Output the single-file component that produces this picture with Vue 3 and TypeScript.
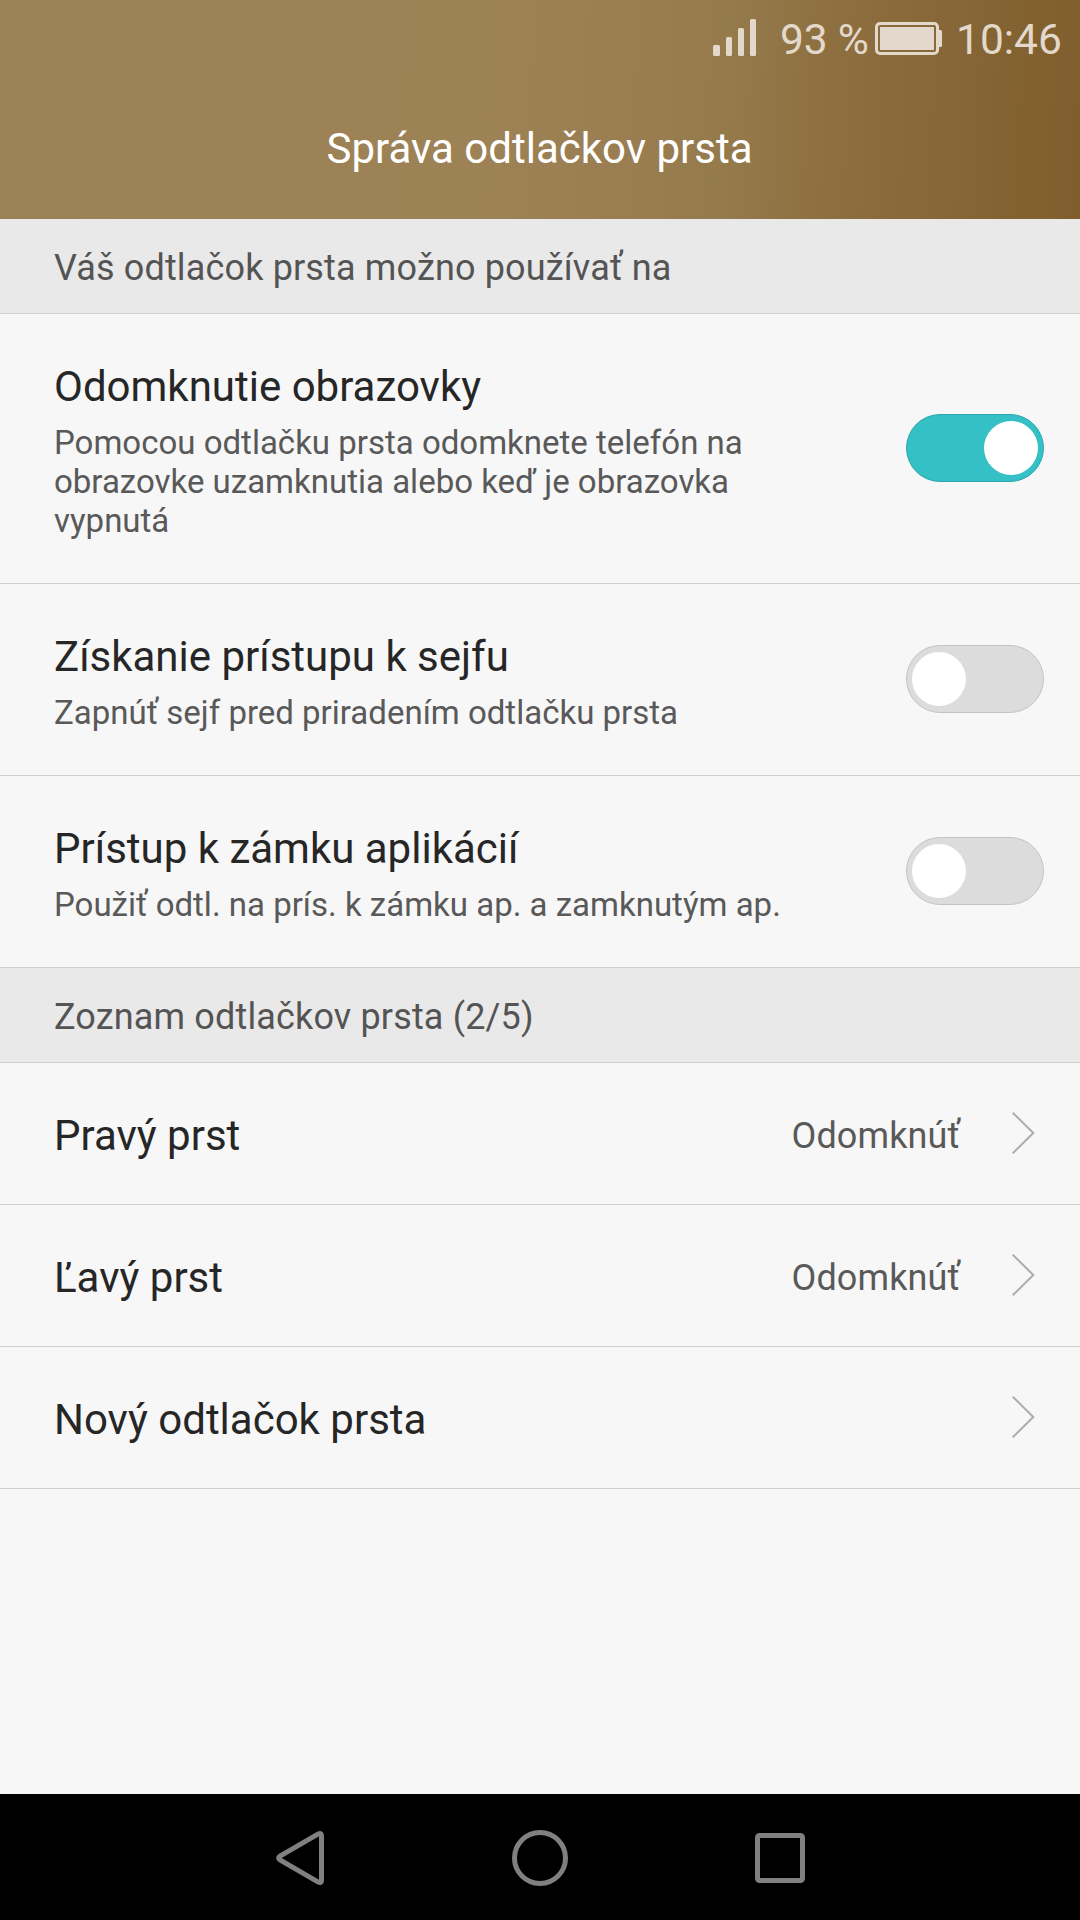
<script setup lang="ts">
interface Permission {
  title: string
  summary: string
  enabled: boolean
}

interface Finger {
  name: string
  action?: string
}

const permissions: Permission[] = [
  {
    title: 'Odomknutie obrazovky',
    summary: 'Pomocou odtlačku prsta odomknete telefón na obrazovke uzamknutia alebo keď je obrazovka vypnutá',
    enabled: true,
  },
  {
    title: 'Získanie prístupu k sejfu',
    summary: 'Zapnúť sejf pred priradením odtlačku prsta',
    enabled: false,
  },
  {
    title: 'Prístup k zámku aplikácií',
    summary: 'Použiť odtl. na prís. k zámku ap. a zamknutým ap.',
    enabled: false,
  },
]

const fingers: Finger[] = [
  { name: 'Pravý prst', action: 'Odomknúť' },
  { name: 'Ľavý prst', action: 'Odomknúť' },
  { name: 'Nový odtlačok prsta' },
]
</script>

<template>
  <div class="screen">
    <header class="header">
      <div class="status">
        <svg class="signal" width="43" height="37" viewBox="0 0 43 37">
          <rect x="0" y="26" width="7" height="11" rx="1.5" />
          <rect x="13" y="18" width="6" height="19" rx="1.5" />
          <rect x="25" y="9" width="6" height="28" rx="1.5" />
          <rect x="37" y="0" width="6" height="37" rx="1.5" />
        </svg>
        <span class="percent">93 %</span>
        <svg class="battery" width="67" height="33" viewBox="0 0 67 33">
          <rect class="shell" x="1.5" y="1.5" width="61" height="30" rx="3.5" />
          <rect x="5" y="5" width="54" height="23" />
          <path d="M64 8h1.5q1.5 0 1.5 1.5v14q0 1.5-1.5 1.5H64z" />
        </svg>
        <span class="clock">10:46</span>
      </div>
      <h1 class="heading">Správa odtlačkov prsta</h1>
    </header>

    <main class="content">
      <h2 class="section">Váš odtlačok prsta možno používať na</h2>
      <div v-for="item in permissions" :key="item.title" class="permission">
        <div class="texts">
          <div class="title">{{ item.title }}</div>
          <div class="summary">{{ item.summary }}</div>
        </div>
        <div class="toggle" :class="{ on: item.enabled }" role="switch" :aria-checked="item.enabled">
          <span class="knob"></span>
        </div>
      </div>

      <h2 class="section">Zoznam odtlačkov prsta (2/5)</h2>
      <div v-for="finger in fingers" :key="finger.name" class="finger">
        <span class="title">{{ finger.name }}</span>
        <span v-if="finger.action" class="action">{{ finger.action }}</span>
        <svg class="chevron" width="23" height="42" viewBox="0 0 23 42">
          <path d="M0.700 0.700L21.300 21L0.700 41.300" />
        </svg>
      </div>
    </main>

    <nav class="navbar">
      <svg width="56" height="56" viewBox="0 0 56 56">
        <path d="M46.300 3.900Q49.500 2.300 49.500 5.800V50.200Q49.500 53.700 46.300 52.100L8 30Q5.200 28 8 26Z" />
      </svg>
      <svg width="56" height="56" viewBox="0 0 56 56">
        <circle cx="28" cy="28" r="25.500" />
      </svg>
      <svg width="56" height="56" viewBox="0 0 56 56">
        <rect x="5.500" y="5.500" width="45" height="45" rx="2" />
      </svg>
    </nav>
  </div>
</template>

<style>
body {
  margin: 0;
}
</style>

<style scoped>
.screen {
  display: flex;
  flex-direction: column;
  width: 1080px;
  height: 1920px;
  overflow: hidden;
  background: #f7f7f7;
  font-family: Roboto, "Noto Sans", sans-serif;
}

.header {
  box-sizing: border-box;
  height: 219px;
  background: linear-gradient(93deg, #9c8156 0%, #9d8256 45%, #9a7e52 58%, #957a4c 67%, #8f7141 75%, #8a6a3b 82%, #866536 89%, #82612f 95%, #805d2d 100%);
}

.status {
  box-sizing: border-box;
  display: flex;
  align-items: flex-start;
  height: 75px;
  padding-left: 713px;
  color: #e2d9cc;
  fill: #e2d9cc;
  font-size: 42.500px;
  line-height: 50px;
  white-space: nowrap;
}

.signal {
  margin-top: 19px;
}

.percent {
  width: 95px;
  margin: 15px 0 0 24px;
  letter-spacing: -0.200px;
}

.battery {
  margin-top: 22px;
}

.shell {
  fill: none;
  stroke: #e2d9cc;
  stroke-width: 3;
}

.clock {
  margin: 15px 0 0 14px;
}

.heading {
  margin: 0;
  padding: 49px 1px 0 0;
  color: #fff;
  font-size: 42px;
  font-weight: 400;
  line-height: 49px;
  text-align: center;
}

.content {
  flex: 1;
}

.section {
  box-sizing: border-box;
  height: 95px;
  margin: 0;
  padding: 28px 54px 0;
  border-bottom: 1px solid #cfcfcf;
  background: #e9e9e9;
  color: #545454;
  font-size: 36px;
  font-weight: 400;
  line-height: 42px;
  letter-spacing: 0.150px;
}

.permission {
  display: flex;
  align-items: center;
  justify-content: space-between;
  padding: 0 36px 0 54px;
  border-bottom: 1px solid #cfcfcf;
}

.texts {
  width: 740px;
  padding: 48px 0 43px;
}

.title {
  color: #262626;
  font-size: 42px;
  line-height: 49px;
}

.summary {
  margin-top: 12px;
  color: #595959;
  font-size: 33px;
  line-height: 39px;
}

.toggle {
  box-sizing: border-box;
  display: flex;
  align-items: center;
  width: 138px;
  height: 68px;
  margin-bottom: 2px;
  padding: 0 5px;
  border: 1px solid #c4c4c4;
  border-radius: 34px;
  background: #dcdcdc;
}

.toggle.on {
  justify-content: flex-end;
  border-color: #2aabb0;
  background: #35c0c6;
}

.knob {
  width: 54px;
  height: 54px;
  border-radius: 50%;
  background: #fff;
}

.finger {
  box-sizing: border-box;
  display: flex;
  align-items: flex-start;
  height: 142px;
  padding: 48px 45px 0 54px;
  border-bottom: 1px solid #cfcfcf;
}

.finger .title {
  flex: 1;
}

.action {
  margin: 4px 52px 0 0;
  color: #595959;
  font-size: 36px;
  line-height: 42px;
  letter-spacing: 0.100px;
}

.chevron {
  margin-top: 1px;
  fill: none;
  stroke: #acacac;
  stroke-width: 2;
}

.navbar {
  box-sizing: border-box;
  display: flex;
  align-items: center;
  justify-content: center;
  gap: 184px;
  height: 126px;
  padding-top: 2px;
  background: #000;
}

.navbar svg {
  fill: none;
  stroke: #808080;
  stroke-width: 5;
}
</style>
